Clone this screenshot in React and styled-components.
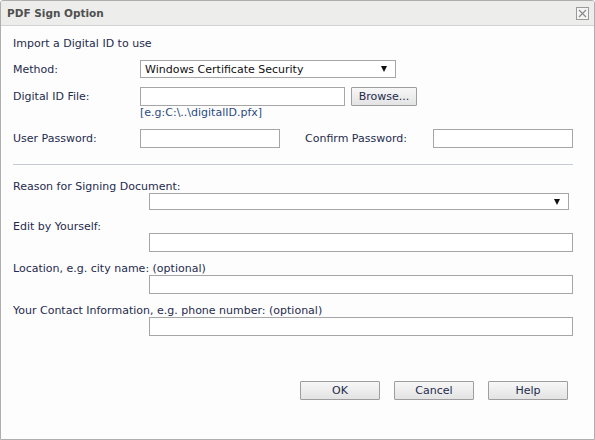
import React from "react";
import styled, { createGlobalStyle } from "styled-components";

const GlobalStyle = createGlobalStyle`
  html, body {
    margin: 0;
    padding: 0;
    background: #ffffff;
  }
  * {
    box-sizing: border-box;
  }
`;

const Window = styled.div`
  width: 595px;
  height: 440px;
  border: 1px solid #aeaeae;
  border-radius: 3px 3px 0 0;
  background: #fdfdfd;
  font-family: "DejaVu Sans", Verdana, sans-serif;
  font-size: 11px;
  color: #1f2b4d;
  display: flex;
  flex-direction: column;
  overflow: hidden;
`;

const TitleBar = styled.div`
  height: 25px;
  flex: none;
  background: #edeeec;
  border-bottom: 1px solid #d3d4d2;
  display: flex;
  align-items: center;
  justify-content: space-between;
  padding: 0 5px 0 6px;
`;

const Title = styled.div`
  font-weight: bold;
  font-size: 10.5px;
  color: #505050;
`;

const CloseBox = styled.div`
  width: 13px;
  height: 13px;
  border: 1px solid #9a9a9a;
  display: flex;
  align-items: center;
  justify-content: center;
  background: #f4f4f4;
`;

const Body = styled.div`
  padding: 0 21px 0 12px;
  display: flex;
  flex-direction: column;
`;

const Intro = styled.div`
  margin-top: 11px;
  line-height: 14px;
`;

const Row = styled.div`
  display: flex;
  align-items: center;
  margin-top: ${(p) => p.$gap || 9}px;
  height: ${(p) => p.$h || 19}px;
`;

const RowLabel = styled.div`
  width: ${(p) => p.$w || 127}px;
  padding-left: ${(p) => p.$pl || 0}px;
  flex: none;
`;

const SelectBox = styled.div`
  width: ${(p) => p.$w}px;
  height: ${(p) => p.$h || 18}px;
  border: 1px solid #a6a6a6;
  background: #ffffff;
  display: flex;
  align-items: center;
  justify-content: space-between;
  padding: 0 8px 0 4px;
  color: #111111;
  margin-left: ${(p) => p.$indent || 0}px;
`;

const Arrow = styled.span`
  width: 0;
  height: 0;
  border-left: 3.5px solid transparent;
  border-right: 3.5px solid transparent;
  border-top: 6px solid #111111;
`;

const TextInput = styled.input`
  width: ${(p) => p.$w}px;
  height: ${(p) => p.$h || 19}px;
  border: 1px solid #a6a6a6;
  background: #ffffff;
  margin: 0;
  margin-left: ${(p) => p.$indent || 0}px;
  padding: 0 3px;
  font: inherit;
  outline: none;
  display: block;
`;

const Button = styled.button`
  width: ${(p) => p.$w || 80}px;
  height: 19px;
  margin: 0;
  margin-left: ${(p) => p.$ml || 0}px;
  padding: 0;
  border: 1px solid #9e9e9e;
  border-radius: 1px;
  background: linear-gradient(#f7f7f7, #e3e3e3);
  font: inherit;
  font-size: 11px;
  color: #1f2b4d;
  cursor: pointer;
`;

const Hint = styled.div`
  margin-left: 127px;
  line-height: 14px;
  color: #2a4a82;
`;

const Separator = styled.div`
  margin-top: 16px;
  height: 1px;
  background: #c6cbd1;
`;

const Field = styled.div`
  margin-top: ${(p) => p.$gap || 10}px;
  display: flex;
  flex-direction: column;
`;

const FieldLabel = styled.div`
  line-height: 13px;
`;

const Footer = styled.div`
  margin-top: 45px;
  display: flex;
  justify-content: flex-end;
  padding-right: 5px;
`;

export default function App() {
  return (
    <>
      <GlobalStyle />
      <Window>
        <TitleBar>
          <Title>PDF Sign Option</Title>
          <CloseBox>
            <svg width="9" height="9" viewBox="0 0 9 9">
              <path d="M1 1 L8 8 M8 1 L1 8" stroke="#8a8a8a" strokeWidth="1.2" />
            </svg>
          </CloseBox>
        </TitleBar>
        <Body>
          <Intro>Import a Digital ID to use</Intro>
          <Row $h={18}>
            <RowLabel>Method:</RowLabel>
            <SelectBox $w={256}>
              Windows Certificate Security
              <Arrow />
            </SelectBox>
          </Row>
          <Row>
            <RowLabel>Digital ID File:</RowLabel>
            <TextInput $w={205} />
            <Button $w={66} $ml={6}>Browse...</Button>
          </Row>
          <Hint>[e.g:C:\..\digitalID.pfx]</Hint>
          <Row>
            <RowLabel>User Password:</RowLabel>
            <TextInput $w={140} />
            <RowLabel $w={153} $pl={25}>Confirm Password:</RowLabel>
            <TextInput $w={140} />
          </Row>
          <Separator />
          <Field $gap={15}>
            <FieldLabel>Reason for Signing Document:</FieldLabel>
            <SelectBox $w={420} $h={17} $indent={136}>
              <span />
              <Arrow />
            </SelectBox>
          </Field>
          <Field>
            <FieldLabel>Edit by Yourself:</FieldLabel>
            <TextInput $w={424} $indent={136} />
          </Field>
          <Field>
            <FieldLabel>Location, e.g. city name: (optional)</FieldLabel>
            <TextInput $w={424} $indent={136} />
          </Field>
          <Field>
            <FieldLabel>Your Contact Information, e.g. phone number: (optional)</FieldLabel>
            <TextInput $w={424} $indent={136} />
          </Field>
          <Footer>
            <Button>OK</Button>
            <Button $ml={14}>Cancel</Button>
            <Button $ml={14}>Help</Button>
          </Footer>
        </Body>
      </Window>
    </>
  );
}
